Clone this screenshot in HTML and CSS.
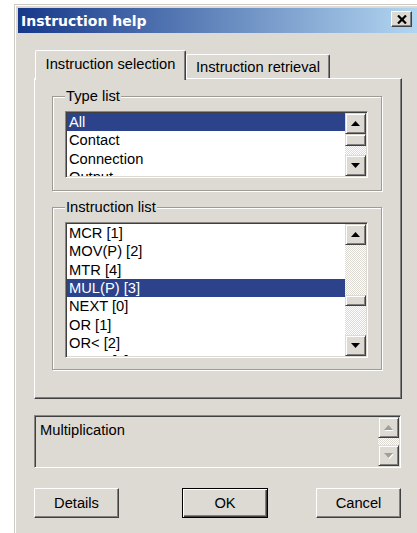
FILE: index.html
```html
<!DOCTYPE html>
<html lang="en">
<head>
<meta charset="utf-8">
<title>Instruction help</title>
<link rel="stylesheet" href="styles.css">
</head>
<body>
<div class="window">
  <div class="titlebar">
    <span class="title">Instruction help</span>
    <div class="close">
      <svg width="10" height="9" viewBox="0 0 10 9"><path d="M1 0.5 L9 8.5 M9 0.5 L1 8.5" stroke="#000" stroke-width="2.2" fill="none"/></svg>
    </div>
  </div>

  <div class="content">
    <div class="tabs">
      <div class="tab active">Instruction selection</div>
      <div class="tab">Instruction retrieval</div>
    </div>

    <div class="panel">
      <fieldset class="group">
        <legend>Type list</legend>
        <div class="listbox type-list">
          <ul class="items">
            <li class="sel">All</li>
            <li>Contact</li>
            <li>Connection</li>
            <li>Output</li>
          </ul>
          <div class="vscroll">
            <div class="sbtn"><svg width="9" height="5" viewBox="0 0 9 5"><polygon points="4.5,0 9,5 0,5" fill="#000"/></svg></div>
            <div class="thumb t1"></div>
            <div class="track"></div>
            <div class="sbtn"><svg width="9" height="5" viewBox="0 0 9 5"><polygon points="0,0 9,0 4.5,5" fill="#000"/></svg></div>
          </div>
        </div>
      </fieldset>

      <fieldset class="group second">
        <legend>Instruction list</legend>
        <div class="listbox instr-list">
          <ul class="items">
            <li>MCR [1]</li>
            <li>MOV(P) [2]</li>
            <li>MTR [4]</li>
            <li class="sel">MUL(P) [3]</li>
            <li>NEXT [0]</li>
            <li>OR [1]</li>
            <li>OR&lt; [2]</li>
            <li>OR&lt;= [3]</li>
          </ul>
          <div class="vscroll">
            <div class="sbtn"><svg width="9" height="5" viewBox="0 0 9 5"><polygon points="4.5,0 9,5 0,5" fill="#000"/></svg></div>
            <div class="track upper"></div>
            <div class="thumb t2"></div>
            <div class="track"></div>
            <div class="sbtn"><svg width="9" height="5" viewBox="0 0 9 5"><polygon points="0,0 9,0 4.5,5" fill="#000"/></svg></div>
          </div>
        </div>
      </fieldset>
    </div>

    <div class="desc">
      <div class="desc-text">Multiplication</div>
      <div class="vscroll disabled">
        <div class="sbtn"><svg width="9" height="6" viewBox="0 0 9 6"><polygon points="5.5,1 10,6 1,6" fill="#fff"/><polygon points="4.5,0 9,5 0,5" fill="#a19d97"/></svg></div>
        <div class="track"></div>
        <div class="sbtn"><svg width="9" height="6" viewBox="0 0 9 6"><polygon points="1,1 10,1 5.5,6" fill="#fff"/><polygon points="0,0 9,0 4.5,5" fill="#a19d97"/></svg></div>
      </div>
    </div>

    <div class="buttons">
      <div class="btn">Details</div>
      <div class="btn default">OK</div>
      <div class="btn cancel">Cancel</div>
    </div>
  </div>
</div>
</body>
</html>
```

FILE: styles.css
```css
* { box-sizing: border-box; }

html, body {
  margin: 0;
  height: 100%;
}

body {
  background: #fff;
  overflow: hidden;
  font-family: "Liberation Sans", Arial, sans-serif;
  font-size: 14.7px;
  color: #000;
}

/* dialog frame */
.window {
  width: 412px;
  height: 560px;
  margin: 4px 0 0 14px;
  padding: 3px;
  background: #ddd9d3;
  border: 1px solid #cdc9c3;
  box-shadow: inset 1px 1px 0 #fff;
  display: flex;
  flex-direction: column;
}

.titlebar {
  flex: none;
  height: 25px;
  display: flex;
  align-items: center;
  padding-left: 3px;
  background: linear-gradient(to right, #16388a, #b4d8f2);
}

.title {
  font-family: "DejaVu Sans", sans-serif;
  font-weight: bold;
  font-size: 14px;
  color: #fff;
}

.close {
  align-self: flex-start;
  margin: 3px 10px 0 auto;
  width: 21px;
  height: 16px;
  display: flex;
  align-items: center;
  justify-content: center;
  background: #ddd9d3;
  border: 1px solid;
  border-color: #fff #404040 #404040 #fff;
  box-shadow: inset -1px -1px 0 #808080;
}

.content {
  padding: 17px 20px 0 16px;
}

/* tab strip */
.tabs {
  display: flex;
  align-items: flex-end;
  padding-left: 1px;
}

.tab {
  height: 24px;
  width: 144px;
  padding-top: 4px;
  line-height: 17px;
  text-align: center;
  white-space: nowrap;
  background: #ddd9d3;
  border: 1px solid;
  border-bottom: none;
  border-color: #fff #404040 #404040 #fff;
  box-shadow: inset -1px 0 0 #808080;
  border-top-left-radius: 2px;
  border-top-right-radius: 2px;
}

.tab.active {
  position: relative;
  z-index: 1;
  width: 151px;
  height: 30px;
  padding-top: 5px;
  margin-bottom: -2px;
}

.panel {
  border: 1px solid;
  border-color: #fff #404040 #404040 #fff;
  box-shadow: inset -1px -1px 0 #808080;
  padding: 9px 19px 28px 17px;
}

/* etched group boxes */
.group {
  margin: 0;
  padding: 6px 13px 12px 12px;
  border: 1px solid #9e9a94;
  box-shadow: inset 1px 1px 0 #fff, 1px 1px 0 #fff;
}

.group.second {
  margin-top: 8px;
  padding-bottom: 11px;
}

.group legend {
  padding: 0 1px;
  line-height: 17px;
  background: #ddd9d3;
}

/* list boxes */
.listbox {
  display: flex;
  background: #fff;
  border: 1px solid;
  border-color: #8a8782 #fff #fff #8a8782;
  box-shadow: inset 1px 1px 0 #404040, inset -1px -1px 0 #ddd9d3;
  padding: 1px;
}

.type-list { height: 67px; }
.instr-list { height: 136px; }

.items {
  flex: 1;
  margin: 0;
  padding: 0;
  list-style: none;
  overflow: hidden;
}

.items li {
  height: 18.33px;
  line-height: 18.33px;
  padding-left: 2px;
  white-space: nowrap;
}

.items li.sel {
  background: #2c438c;
  color: #fff;
}

/* scroll bars */
.vscroll {
  flex: none;
  width: 21px;
  display: flex;
  flex-direction: column;
}

.sbtn,
.thumb {
  background: #ddd9d3;
  border: 1px solid;
  border-color: #ddd9d3 #404040 #404040 #ddd9d3;
  box-shadow: inset 1px 1px 0 #fff, inset -1px -1px 0 #808080;
}

.sbtn {
  height: 21px;
  flex: none;
  display: flex;
  align-items: center;
  justify-content: center;
}

.thumb { flex: none; }
.thumb.t1 { height: 12px; }
.thumb.t2 { height: 11px; }

.track {
  flex: 1;
  background: repeating-conic-gradient(#fff 0 25%, #ddd9d3 0 50%) 0 0 / 2px 2px;
}

.track.upper {
  flex: none;
  height: 50px;
}

/* description field */
.desc {
  margin: 16px 1px 0 0;
  height: 53px;
  display: flex;
  border: 1px solid;
  border-color: #8a8782 #fff #fff #8a8782;
  box-shadow: inset 1px 1px 0 #404040, inset -1px -1px 0 #ddd9d3;
  padding: 1px;
}

.desc-text {
  flex: 1;
  padding: 5px 0 0 4px;
  line-height: 17px;
}

/* buttons */
.buttons {
  display: flex;
  margin: 20px 1px 0 0;
}

.btn {
  width: 85px;
  height: 30px;
  line-height: 28px;
  text-align: center;
  background: #ddd9d3;
  border: 1px solid;
  border-color: #fff #404040 #404040 #fff;
  box-shadow: inset -1px -1px 0 #808080;
}

.btn.default {
  width: 86px;
  margin-left: 63px;
  border-color: #000;
  box-shadow: inset 1px 1px 0 #fff, inset -1px -1px 0 #404040, inset -2px -2px 0 #808080;
}

.btn.cancel {
  margin-left: auto;
}
```
